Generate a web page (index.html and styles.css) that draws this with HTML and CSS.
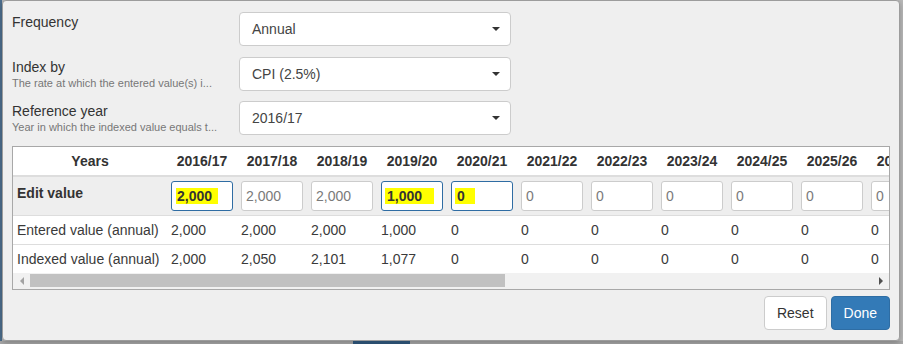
FILE: index.html
```html
<!DOCTYPE html>
<html lang="en">
<head>
    <meta charset="UTF-8">
    <meta name="viewport" content="width=device-width, initial-scale=1.0">
    <title>Indexed values</title>
    <link rel="stylesheet" href="styles.css">
</head>
<body>
    <div class="screen">
        <div class="page-edge"></div>
        <div class="dialog">
            <!-- settings -->
            <div class="settings">
                <div class="setting">
                    <div class="setting-label">
                        <div class="label-title">Frequency</div>
                    </div>
                    <div class="select"><span>Annual</span><span class="caret"></span></div>
                </div>
                <div class="setting">
                    <div class="setting-label">
                        <div class="label-title">Index by</div>
                        <div class="label-help">The rate at which the entered value(s) i...</div>
                    </div>
                    <div class="select"><span>CPI (2.5%)</span><span class="caret"></span></div>
                </div>
                <div class="setting">
                    <div class="setting-label">
                        <div class="label-title">Reference year</div>
                        <div class="label-help">Year in which the indexed value equals t...</div>
                    </div>
                    <div class="select"><span>2016/17</span><span class="caret"></span></div>
                </div>
            </div>

            <!-- values grid -->
            <div class="grid-box">
                <div class="grid-scroll">
                    <table class="grid">
                        <colgroup>
                            <col class="col-name">
                            <col class="col-year"><col class="col-year"><col class="col-year"><col class="col-year">
                            <col class="col-year"><col class="col-year"><col class="col-year"><col class="col-year">
                            <col class="col-year"><col class="col-year"><col class="col-year">
                        </colgroup>
                        <thead>
                            <tr>
                                <th>Years</th>
                                <th>2016/17</th><th>2017/18</th><th>2018/19</th><th>2019/20</th>
                                <th>2020/21</th><th>2021/22</th><th>2022/23</th><th>2023/24</th>
                                <th>2024/25</th><th>2025/26</th><th>2026/27</th>
                            </tr>
                        </thead>
                        <tbody>
                            <tr class="edit-row">
                                <td class="row-name">Edit value</td>
                                <td><div class="cell-input focused"><mark class="hl hl-a">2,000</mark></div></td>
                                <td><div class="cell-input">2,000</div></td>
                                <td><div class="cell-input">2,000</div></td>
                                <td><div class="cell-input focused"><mark class="hl hl-b">1,000</mark></div></td>
                                <td><div class="cell-input focused"><mark class="hl hl-c">0</mark></div></td>
                                <td><div class="cell-input">0</div></td>
                                <td><div class="cell-input">0</div></td>
                                <td><div class="cell-input">0</div></td>
                                <td><div class="cell-input">0</div></td>
                                <td><div class="cell-input">0</div></td>
                                <td><div class="cell-input">0</div></td>
                            </tr>
                            <tr class="data-row">
                                <td>Entered value (annual)</td>
                                <td>2,000</td><td>2,000</td><td>2,000</td><td>1,000</td>
                                <td>0</td><td>0</td><td>0</td><td>0</td><td>0</td><td>0</td><td>0</td>
                            </tr>
                            <tr class="data-row">
                                <td>Indexed value (annual)</td>
                                <td>2,000</td><td>2,050</td><td>2,101</td><td>1,077</td>
                                <td>0</td><td>0</td><td>0</td><td>0</td><td>0</td><td>0</td><td>0</td>
                            </tr>
                        </tbody>
                    </table>
                </div>
                <div class="hscroll">
                    <span class="hscroll-btn"><span class="arrow-left"></span></span>
                    <span class="hscroll-thumb"></span>
                    <span class="hscroll-track"></span>
                    <span class="hscroll-btn"><span class="arrow-right"></span></span>
                </div>
            </div>

            <div class="actions">
                <button class="btn">Reset</button>
                <button class="btn btn-primary">Done</button>
            </div>
        </div>
    </div>
    <div class="page-bottom"><span class="page-bottom-btn"></span></div>
</body>
</html>
```

FILE: styles.css
```css
* {
    box-sizing: border-box;
    margin: 0;
    padding: 0;
}

body {
    height: 344px;
    overflow: hidden;
    background: #b9b9b9;
    font-family: "Liberation Sans", Arial, sans-serif;
    font-size: 14px;
    color: #333;
}

.screen {
    display: flex;
    height: 341px;
}

.page-edge {
    width: 2px;
    background: #4d6f8e;
}

.dialog {
    width: 898px;
    height: 341px;
    background: #efefef;
    border: 1px solid #9c9c9c;
    border-radius: 4px;
    padding: 11px 9px 10px;
    box-shadow: 0 2px 6px rgba(0, 0, 0, 0.25);
}

/* settings */
.settings {
    display: flex;
    flex-direction: column;
    gap: 10.5px;
}

.setting {
    display: grid;
    grid-template-columns: 227px 272px;
    height: 34px;
}

.setting-label {
    padding-top: 1px;
}

.label-title {
    font-size: 14px;
    line-height: 18px;
    color: #333;
}

.label-help {
    font-size: 11px;
    line-height: 14px;
    color: #777;
    white-space: nowrap;
}

.select {
    display: flex;
    align-items: center;
    justify-content: space-between;
    height: 34px;
    padding: 0 10px 0 12px;
    background: #fff;
    border: 1px solid #ccc;
    border-radius: 4px;
    color: #444;
}

.caret {
    width: 0;
    height: 0;
    border-top: 4px solid #333;
    border-left: 4px solid transparent;
    border-right: 4px solid transparent;
}

/* grid */
.grid-box {
    margin-top: 11px;
    border: 1px solid #a8a8a8;
    background: #fff;
}

.grid-scroll {
    overflow: hidden;
}

.grid {
    width: 924px;
    table-layout: fixed;
    border-collapse: separate;
    border-spacing: 0;
}

.col-name {
    width: 154px;
}

.col-year {
    width: 70px;
}

.grid th {
    height: 30px;
    padding: 4px;
    line-height: 20px;
    font-weight: bold;
    text-align: center;
    white-space: nowrap;
    border-bottom: 2px solid #ddd;
}

.grid td {
    padding: 4px;
    line-height: 20px;
    text-align: left;
    white-space: nowrap;
}

.edit-row td {
    background: #eee;
}

.edit-row .row-name {
    vertical-align: top;
    padding-top: 6px;
    font-weight: bold;
}

.data-row td {
    border-top: 1px solid #ddd;
    color: #3a3a3a;
}

.cell-input {
    height: 30px;
    padding: 0 4px;
    line-height: 28px;
    background: #fff;
    border: 1px solid #ccc;
    border-radius: 3px;
    color: #7a7a7a;
}

.cell-input.focused {
    border-color: #2f6ca3;
}

.hl {
    display: inline-block;
    height: 16px;
    line-height: 16px;
    vertical-align: middle;
    margin-top: -2px;
    padding-left: 1px;
    background: #ffff00;
    color: #333;
    font-weight: bold;
}

.hl-a {
    width: 42px;
}

.hl-b {
    width: 49px;
    margin-left: -1px;
    padding-left: 2px;
}

.hl-c {
    width: 20px;
    margin-left: -1px;
    padding-left: 2px;
}

/* fake horizontal scrollbar */
.hscroll {
    display: flex;
    height: 16px;
    background: #f1f1f1;
}

.hscroll-btn {
    width: 17px;
    display: flex;
    align-items: center;
    justify-content: center;
}

.hscroll-thumb {
    width: 475px;
    margin: 1px 0 2px;
    background: #c1c1c1;
}

.hscroll-track {
    flex: 1;
}

.arrow-left {
    width: 0;
    height: 0;
    border-right: 4px solid #a3a3a3;
    border-top: 4px solid transparent;
    border-bottom: 4px solid transparent;
}

.arrow-right {
    width: 0;
    height: 0;
    border-left: 4px solid #505050;
    border-top: 4px solid transparent;
    border-bottom: 4px solid transparent;
}

/* buttons */
.actions {
    display: flex;
    justify-content: flex-end;
    gap: 4px;
    margin-top: 6px;
}

.btn {
    height: 34px;
    padding: 6px 12px;
    font-family: inherit;
    font-size: 14px;
    line-height: 20px;
    background: #fff;
    color: #333;
    border: 1px solid #ccc;
    border-radius: 4px;
    cursor: pointer;
}

.btn-primary {
    background: #337ab7;
    border-color: #2e6da4;
    color: #fff;
}

/* page behind the dialog */
.page-bottom {
    height: 3px;
    padding-left: 353px;
    display: flex;
    background: #a9a9a9;
}

.page-bottom-btn {
    width: 57px;
    background: #2a4d6e;
}
```
